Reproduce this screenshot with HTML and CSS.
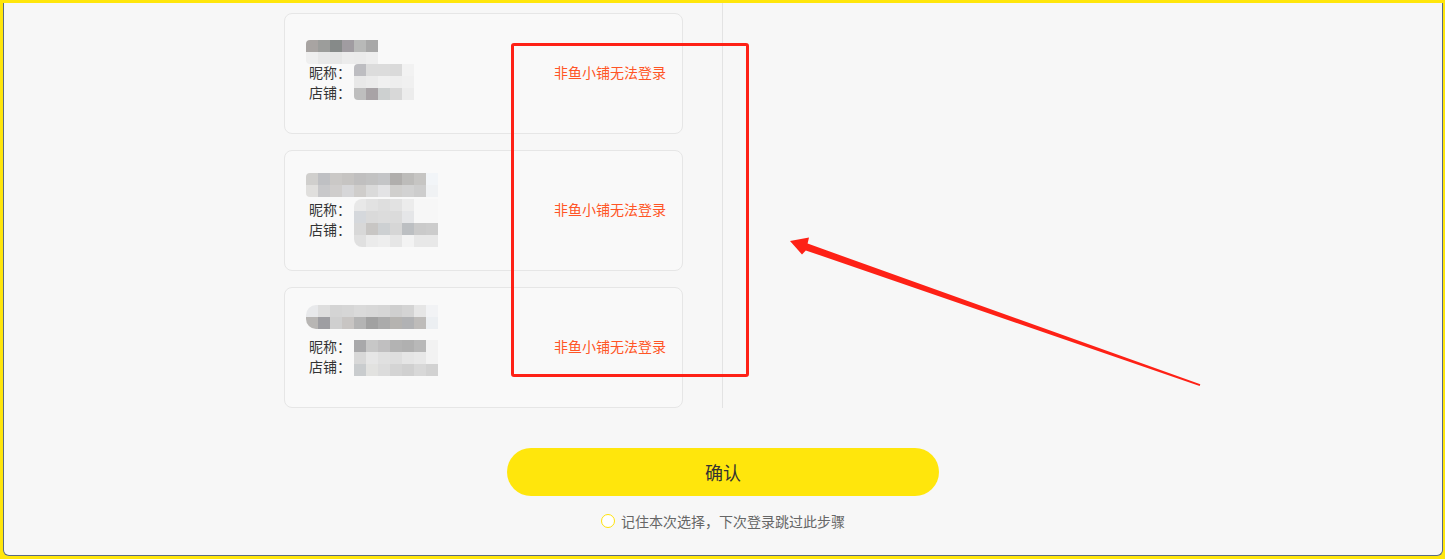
FILE: index.html
```html
<!DOCTYPE html>
<html lang="zh-CN">
<head>
<meta charset="utf-8">
<title>选择店铺</title>
<link rel="stylesheet" href="styles.css">
</head>
<body>
<div class="frame">
  <div class="screen">
    <div class="picker">
      <div class="list">
        <div class="card">
          <div class="info">
            <div class="title"><div class="mosaic m1t"><div class="row"></div><div class="row"></div></div></div>
            <div class="fields">
              <div class="labels"><div>昵称：</div><div>店铺：</div></div>
              <div class="mosaic m1i"><div class="row"></div><div class="row"></div><div class="row"></div></div>
            </div>
          </div>
          <div class="status">非鱼小铺无法登录</div>
        </div>
        <div class="card">
          <div class="info">
            <div class="title"><div class="mosaic m2t"><div class="row"></div><div class="row"></div></div></div>
            <div class="fields">
              <div class="labels"><div>昵称：</div><div>店铺：</div></div>
              <div class="mosaic m2i"><div class="row"></div><div class="row"></div><div class="row"></div><div class="row"></div></div>
            </div>
          </div>
          <div class="status">非鱼小铺无法登录</div>
        </div>
        <div class="card">
          <div class="info">
            <div class="title"><div class="mosaic m3t"><div class="row"></div><div class="row"></div></div></div>
            <div class="fields">
              <div class="labels"><div>昵称：</div><div>店铺：</div></div>
              <div class="mosaic m3i"><div class="row"></div><div class="row"></div><div class="row"></div></div>
            </div>
          </div>
          <div class="status">非鱼小铺无法登录</div>
        </div>
      </div>
      <div class="side"></div>
    </div>
    <div class="actions">
      <button class="confirm" type="button">确认</button>
      <label class="remember"><span class="radio"></span><span>记住本次选择，下次登录跳过此步骤</span></label>
    </div>

    <div class="mark-box"></div>
    <svg class="mark-arrow" width="1445" height="559" viewBox="0 0 1445 559" xmlns="http://www.w3.org/2000/svg">
      <polygon points="790,241 809,237.5 807.6,243.6 1200.3,384.2 1199.7,386 805.8,250.4 802,254.5" fill="#fe2116"/>
    </svg>
  </div>
</div>
</body>
</html>
```

FILE: styles.css
```css
* { box-sizing: border-box; }

html, body {
  margin: 0;
  padding: 0;
  width: 1445px;
  height: 559px;
  overflow: hidden;
  font-family: "Noto Sans CJK SC", "Noto Sans", sans-serif;
}

.frame {
  width: 1445px;
  height: 559px;
  border: 3px solid #ffe60c;
  border-right-width: 2px;
  background: #ffe60c;
}

.screen {
  position: relative;
  height: 100%;
  background: #f7f7f7;
  border: 1px solid #5a6b80;
  border-top: 0;
  border-radius: 0 0 6px 6px;
}

.picker {
  width: 878px;
  margin: 0 auto;
  display: grid;
  grid-template-columns: 438px 440px;
}

.list {
  padding-top: 10px;
  padding-right: 39px;
  display: flex;
  flex-direction: column;
  gap: 16px;
}

.side {
  border-left: 1px solid #e3e3e3;
}

.card {
  height: 121px;
  background: #f9f9f9;
  border: 1px solid #e6e6e6;
  border-radius: 8px;
  padding: 0 16px 0 24px;
  display: flex;
  justify-content: space-between;
}

.info {
  display: flex;
  flex-direction: column;
}

.title {
  height: 49px;
}

.fields {
  display: flex;
  align-items: flex-start;
}

.labels {
  font-size: 14px;
  line-height: 20px;
  color: #333;
  margin-top: -1px;
}

.status {
  align-self: center;
  margin-bottom: 3px;
  font-size: 14px;
  color: #ff5526;
  white-space: nowrap;
}

/* pixelated (blurred) private text */
.mosaic .row { height: 12px; }
.mosaic { border-radius: 4px 0 0 4px; overflow: hidden; }

.m1t { margin: 26px 0 0 -3px; width: 72px; }
.m1t .row:nth-child(1) { background: linear-gradient(90deg, #a8a4a2 0 12px, #9c9d9b 12px 24px, #868a89 24px 36px, #a09ca1 36px 48px, #b8b9b8 48px 60px, #a8a8a8 60px 72px); }
.m1t .row:nth-child(2) { background: linear-gradient(90deg, #efefef 0 12px, #e8e8e8 12px 24px, #e6e6e6 24px 36px, #ececec 36px 48px, #ebebeb 48px 60px, #eeeeee 60px 72px); }

.m1i { margin: 1px 0 0 3px; width: 60px; }
.m1i .row:nth-child(1) { background: linear-gradient(90deg, #bdbdc1 0 12px, #dcdcdc 12px 24px, #dcdcdc 24px 36px, #dadada 36px 48px, #f2f2f2 48px 60px); }
.m1i .row:nth-child(2) { background: linear-gradient(90deg, #e8e8e8 0 12px, #ebebeb 12px 24px, #f0f0f0 24px 36px, #eeeeee 36px 48px, #f0f0f0 48px 60px); }
.m1i .row:nth-child(3) { background: linear-gradient(90deg, #bebebe 0 12px, #a8a3a6 12px 24px, #cdd0d0 24px 36px, #d8d8d8 36px 48px, #ececec 48px 60px); }

.m2t { margin: 22px 0 0 -3px; width: 132px; }
.m2t .row:nth-child(1) { background: linear-gradient(90deg, #d0cfcd 0 12px, #bfc0c3 12px 24px, #cac8c6 24px 36px, #c6c4c2 36px 48px, #c0bfbf 48px 60px, #c2c2c2 60px 72px, #c4c5c7 72px 84px, #b0aeac 84px 96px, #bdbcba 96px 108px, #c6c5c3 108px 120px, #f2f5f8 120px 132px); }
.m2t .row:nth-child(2) { background: linear-gradient(90deg, #e0dfdd 0 12px, #c8c8ca 12px 24px, #cfcdcc 24px 36px, #d6d6d8 36px 48px, #cfcdcb 48px 60px, #dadada 60px 72px, #e3e3e5 72px 84px, #d0cfcd 84px 96px, #d2d2d2 96px 108px, #cdcdcd 108px 120px, #f0f2f4 120px 132px); }

.m2i { margin: -1px 0 0 3px; width: 84px; border-radius: 8px 0 0 8px; }
.m2i .row:nth-child(1) { background: linear-gradient(90deg, #e8e8e8 0 12px, #e2e2e2 12px 24px, #dedede 24px 36px, #e2e2e2 36px 48px, #ececec 48px 60px, #f7f7f7 60px 84px); }
.m2i .row:nth-child(2) { background: linear-gradient(90deg, #d5d8dc 0 12px, #dadada 12px 24px, #dcdcdc 24px 36px, #dbdbdb 36px 48px, #e5e6e8 48px 60px, #f7f7f7 60px 84px); }
.m2i .row:nth-child(3) { background: linear-gradient(90deg, #d8d8d8 0 12px, #c8c6c4 12px 24px, #cdd0d2 24px 36px, #d6d6d6 36px 48px, #bcbfc2 48px 60px, #cacaca 60px 72px, #cccccc 72px 84px); }
.m2i .row:nth-child(4) { background: linear-gradient(90deg, #e0e0e0 0 12px, #ebebeb 12px 24px, #eeeeee 24px 36px, #e6e6e6 36px 48px, #f3f3f3 48px 60px, #e8e8e8 60px 72px, #e8e8e8 72px 84px); }

.m3t { margin: 17px 0 0 -3px; width: 132px; border-radius: 10px 0 0 10px; }
.m3t .row:nth-child(1) { background: linear-gradient(90deg, #e8e9eb 0 12px, #dedede 12px 24px, #d4d4d4 24px 36px, #d6d6d6 36px 48px, #dadada 48px 60px, #d8d8d8 60px 72px, #d6d6d6 72px 84px, #cfcfcf 84px 96px, #d4d4d4 96px 108px, #e6e6e6 108px 120px, #f2f3f5 120px 132px); }
.m3t .row:nth-child(2) { background: linear-gradient(90deg, #b8b6b4 0 12px, #9e9ea2 12px 24px, #cfcfcf 24px 36px, #c8c5c3 36px 48px, #b4b4b4 48px 60px, #a1a1a1 60px 72px, #ababab 72px 84px, #b5b3b0 84px 96px, #b1b2b4 96px 108px, #bebcba 108px 120px, #eceff2 120px 132px); }

.m3i { margin: 3px 0 0 3px; width: 84px; border-radius: 0; }
.m3i .row:nth-child(1) { background: linear-gradient(90deg, #a8a8aa 0 12px, #c7c7c7 12px 24px, #c0bfc0 24px 36px, #b3b3b3 36px 48px, #b0b0b0 48px 60px, #b8b8b8 60px 72px, #f2f2f2 72px 84px); }
.m3i .row:nth-child(2) { background: linear-gradient(90deg, #d8d8d8 0 12px, #e6e6e6 12px 24px, #e0e0e0 24px 36px, #dedede 36px 48px, #e5e5e5 48px 60px, #e8e8e8 60px 72px, #f2f2f2 72px 84px); }
.m3i .row:nth-child(3) { background: linear-gradient(90deg, #c9ccce 0 12px, #e2e2e0 12px 24px, #dcdcdc 24px 36px, #d4d4d4 36px 48px, #d0d0d0 48px 60px, #d8d8d8 60px 72px, #d2d2d2 72px 84px); }

.actions {
  display: flex;
  flex-direction: column;
  align-items: center;
  padding-top: 40px;
}

.confirm {
  width: 432px;
  height: 48px;
  border: 0;
  border-radius: 24px;
  background: #ffe60c;
  color: #333;
  font-family: inherit;
  font-size: 18px;
  cursor: pointer;
}

.remember {
  margin-top: 15px;
  display: flex;
  align-items: center;
  gap: 6px;
  font-size: 14px;
  line-height: 20px;
  color: #666;
}

.radio {
  width: 14px;
  height: 14px;
  border-radius: 50%;
  border: 1.5px solid #ffe20a;
  background: #fff;
}

/* screenshot annotations */
.mark-box {
  position: absolute;
  left: 507px;
  top: 40px;
  width: 238px;
  height: 334px;
  border: 3px solid #fe2116;
  border-radius: 3px;
}

.mark-arrow {
  position: absolute;
  left: -4px;
  top: -3px;
  pointer-events: none;
}
```
